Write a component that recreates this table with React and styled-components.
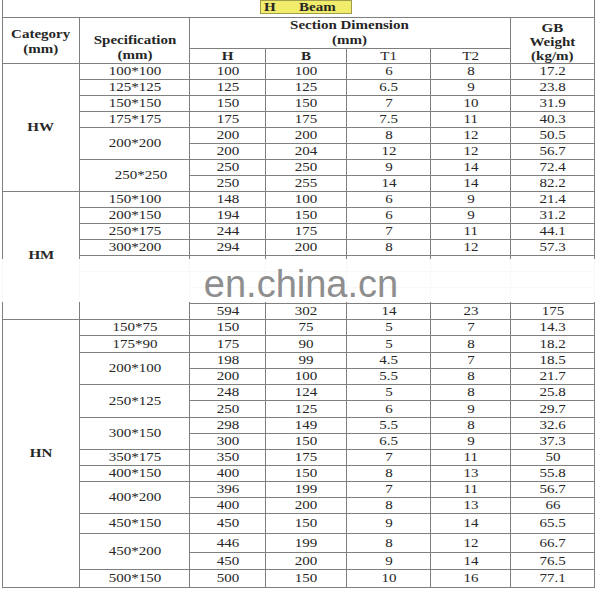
import React from 'react';
import styled, { createGlobalStyle } from 'styled-components';

const GlobalStyle = createGlobalStyle`
  body {
    margin: 0;
    background: #fff;
  }
`;

const Sheet = styled.div`
  position: relative;
  width: 598px;
  height: 593px;
  padding-left: 2px;
  box-sizing: border-box;
  overflow: hidden;
`;

const Table = styled.table`
  border-collapse: collapse;
  table-layout: fixed;
  width: 593px;
  font-family: "Liberation Serif", "Times New Roman", serif;
  font-size: 12px;
  color: #262626;
`;

const Row = styled.tr`
  height: ${(p) => p.$h || 16}px;
`;

const Cell = styled.td`
  border: 1px solid #7f7f7f;
  padding: 0;
  text-align: center;
  vertical-align: ${(p) => p.$valign || 'middle'};
  line-height: ${(p) => p.$lh || 14}px;
  font-weight: ${(p) => (p.$bold ? 700 : 400)};
  padding-left: ${(p) => p.$shift || 0}px;
  padding-top: ${(p) => p.$pt || 0}px;
`;

const TitleCell = styled.td`
  border: 1px solid #7f7f7f;
  border-top: none;
  padding: 0;
  vertical-align: top;
`;

const Badge = styled.div`
  display: flex;
  align-items: center;
  box-sizing: border-box;
  width: 92px;
  height: 14px;
  margin-left: 257px;
  padding-left: 3px;
  background: #f1ec6c;
  border: 1px solid #a09d4c;
  font-weight: 700;
  line-height: 12px;
`;

const Text = styled.span`
  display: inline-block;
  transform: scaleX(1.25);
  transform-origin: ${(p) => p.$origin || 'center'};
`;

const Gap = styled.span`
  display: inline-block;
  width: ${(p) => p.$w}px;
`;

const Band = styled.div`
  position: absolute;
  left: 0;
  top: 259px;
  width: 100%;
  height: 43px;
  display: flex;
  justify-content: center;
  align-items: flex-start;
  padding-top: 6px;
  box-sizing: border-box;
  background: rgba(255, 255, 255, 0.95);
`;

const Watermark = styled.span`
  font-family: "Liberation Sans", Arial, sans-serif;
  font-size: 38px;
  line-height: 38px;
  color: #8e8e8e;
  padding-left: 4px;
`;

const blank = ['', '', '', '', ''];

const groups = [
  {
    name: 'HW',
    specs: [
      { spec: '100*100', rows: [['100', '100', '6', '8', '17.2']] },
      { spec: '125*125', rows: [['125', '125', '6.5', '9', '23.8']] },
      { spec: '150*150', rows: [['150', '150', '7', '10', '31.9']] },
      { spec: '175*175', rows: [['175', '175', '7.5', '11', '40.3']] },
      { spec: '200*200', rows: [['200', '200', '8', '12', '50.5'], ['200', '204', '12', '12', '56.7']] },
      { spec: '250*250', shift: 12, rows: [['250', '250', '9', '14', '72.4'], ['250', '255', '14', '14', '82.2']] },
    ],
  },
  {
    name: 'HM',
    specs: [
      { spec: '150*100', rows: [['148', '100', '6', '9', '21.4']] },
      { spec: '200*150', rows: [['194', '150', '6', '9', '31.2']] },
      { spec: '250*175', rows: [['244', '175', '7', '11', '44.1']] },
      { spec: '300*200', rows: [['294', '200', '8', '12', '57.3']] },
      { spec: '', rows: [blank] },
      { spec: '', rows: [blank, blank, ['594', '302', '14', '23', '175']] },
    ],
  },
  {
    name: 'HN',
    specs: [
      { spec: '150*75', rows: [['150', '75', '5', '7', '14.3']] },
      { spec: '175*90', rows: [['175', '90', '5', '8', '18.2']], heights: [17] },
      { spec: '200*100', rows: [['198', '99', '4.5', '7', '18.5'], ['200', '100', '5.5', '8', '21.7']] },
      { spec: '250*125', rows: [['248', '124', '5', '8', '25.8'], ['250', '125', '6', '9', '29.7']], heights: [16, 17] },
      { spec: '300*150', rows: [['298', '149', '5.5', '8', '32.6'], ['300', '150', '6.5', '9', '37.3']] },
      { spec: '350*175', rows: [['350', '175', '7', '11', '50']] },
      { spec: '400*150', rows: [['400', '150', '8', '13', '55.8']] },
      { spec: '400*200', rows: [['396', '199', '7', '11', '56.7'], ['400', '200', '8', '13', '66']] },
      { spec: '450*150', rows: [['450', '150', '9', '14', '65.5']], heights: [20] },
      { spec: '450*200', rows: [['446', '199', '8', '12', '66.7'], ['450', '200', '9', '14', '76.5']], heights: [19, 17] },
      { spec: '500*150', rows: [['500', '150', '10', '16', '77.1']], heights: [18] },
    ],
  },
];

const widths = [77, 110, 76, 81, 84, 80, 84];

function GroupRows({ group }) {
  const total = group.specs.reduce((n, s) => n + s.rows.length, 0);
  const out = [];
  group.specs.forEach((s, si) => {
    s.rows.forEach((vals, ri) => {
      const h = s.heights ? s.heights[ri] : 16;
      out.push(
        <Row key={`${si}-${ri}`} $h={h}>
          {si === 0 && ri === 0 && (
            <Cell rowSpan={total} $bold>
              <Text>{group.name}</Text>
            </Cell>
          )}
          {ri === 0 && (
            <Cell rowSpan={s.rows.length} $shift={s.shift}>
              <Text>{s.spec}</Text>
            </Cell>
          )}
          {vals.map((v, i) => (
            <Cell key={i}>
              <Text>{v}</Text>
            </Cell>
          ))}
        </Row>
      );
    });
  });
  return out;
}

export default function App() {
  return (
    <>
      <GlobalStyle />
      <Sheet>
        <Table>
          <colgroup>
            {widths.map((w, i) => (
              <col key={i} style={{ width: w }} />
            ))}
          </colgroup>
          <tbody>
            <Row $h={17}>
              <TitleCell colSpan={7}>
                <Badge>
                  <Text $origin="left">H</Text>
                  <Gap $w={26} />
                  <Text $origin="left">Beam</Text>
                </Badge>
              </TitleCell>
            </Row>
            <Row $h={31}>
              <Cell rowSpan={2} $bold $lh={15} $pt={3}>
                <Text>Category<br />(mm)</Text>
              </Cell>
              <Cell rowSpan={2} $bold $lh={15} $valign="bottom">
                <Text>Specification<br />(mm)</Text>
              </Cell>
              <Cell colSpan={4} $bold $lh={15}>
                <Text>Section Dimension<br />(mm)</Text>
              </Cell>
              <Cell rowSpan={2} $bold $lh={14} $pt={3}>
                <Text>GB<br />Weight<br />(kg/m)</Text>
              </Cell>
            </Row>
            <Row $h={15}>
              <Cell $bold><Text>H</Text></Cell>
              <Cell $bold><Text>B</Text></Cell>
              <Cell><Text>T1</Text></Cell>
              <Cell><Text>T2</Text></Cell>
            </Row>
            {groups.map((g) => (
              <GroupRows key={g.name} group={g} />
            ))}
          </tbody>
        </Table>
        <Band>
          <Watermark>en.china.cn</Watermark>
        </Band>
      </Sheet>
    </>
  );
}
